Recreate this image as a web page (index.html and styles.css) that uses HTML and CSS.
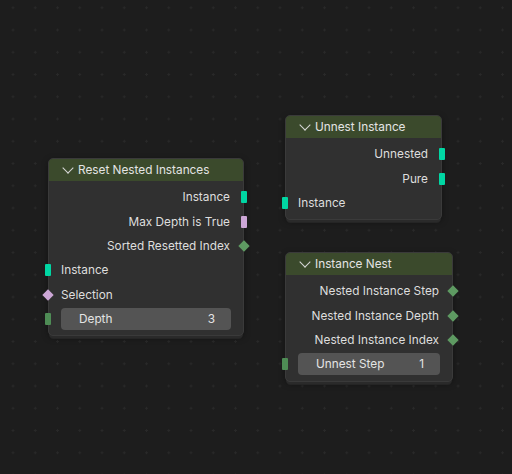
FILE: index.html
```html
<!DOCTYPE html>
<html>
<head>
  <title>Node Editor</title>
  <link rel="stylesheet" href="styles.css">
</head>
<body>
  <div class="canvas">

    <div class="node node-reset">
      <div class="node-header"><span class="chevron"></span>Reset Nested Instances</div>
      <div class="node-body">
        <div class="row out">Instance<span class="socket bar geo"></span></div>
        <div class="row out">Max Depth is True<span class="socket bar bool"></span></div>
        <div class="row out">Sorted Resetted Index<span class="socket diamond int"></span></div>
        <div class="row in"><span class="socket bar geo"></span>Instance</div>
        <div class="row in"><span class="socket diamond bool"></span>Selection</div>
        <div class="row in">
          <span class="socket bar int-dim"></span>
          <div class="field"><span>Depth</span><span>3</span></div>
        </div>
      </div>
    </div>

    <div class="node node-unnest">
      <div class="node-header"><span class="chevron"></span>Unnest Instance</div>
      <div class="node-body">
        <div class="row out">Unnested<span class="socket bar geo"></span></div>
        <div class="row out">Pure<span class="socket bar geo"></span></div>
        <div class="row in"><span class="socket bar geo"></span>Instance</div>
      </div>
    </div>

    <div class="node node-nest">
      <div class="node-header"><span class="chevron"></span>Instance Nest</div>
      <div class="node-body">
        <div class="row out">Nested Instance Step<span class="socket diamond int"></span></div>
        <div class="row out">Nested Instance Depth<span class="socket diamond int"></span></div>
        <div class="row out">Nested Instance Index<span class="socket diamond int"></span></div>
        <div class="row in">
          <span class="socket bar int-dim"></span>
          <div class="field"><span>Unnest Step</span><span>1</span></div>
        </div>
      </div>
    </div>

  </div>
</body>
</html>
```

FILE: styles.css
```css
body {
  margin: 0;
  background: #1d1d1d;
  font-family: Inter, "Noto Sans", sans-serif;
  font-size: 11.8px;
  color: #dedede;
}

.canvas {
  position: relative;
  width: 512px;
  height: 474px;
  overflow: hidden;
  background-color: #1d1d1d;
  background-image: radial-gradient(circle, #292929 1px, transparent 1.2px);
  background-size: 22.25px 22.25px;
  background-position: 1.9px 18.9px;
}

/* nodes sit on a free canvas */
.node {
  position: absolute;
  background: #303030;
  border: 1px solid #3a3a3a;
  border-radius: 5px;
  box-shadow: 0 3px 0 -1px #2a2a2a, 0 5px 0 -2px #252525, 0 2px 6px rgba(0, 0, 0, 0.35);
}

.node-reset { left: 48px; top: 158px; width: 194px; }
.node-unnest { left: 285px; top: 115px; width: 155px; }
.node-nest { left: 285px; top: 252px; width: 166px; }

.node-header {
  height: 22px;
  display: flex;
  align-items: center;
  padding-left: 14px;
  background: #3b4a2c;
  border-radius: 4px 4px 0 0;
  color: #e4e4e4;
}

.chevron {
  width: 7px;
  height: 7px;
  border-right: 1.2px solid #d8d8d8;
  border-bottom: 1.2px solid #d8d8d8;
  transform: rotate(45deg);
  margin: -5px 6px 0 1px;
}

.node-body {
  padding: 4px 0 4px;
}

.row {
  position: relative;
  height: 24.4px;
  display: flex;
  align-items: center;
}

.row.out {
  justify-content: flex-end;
  padding-right: 13px;
}

.row.in {
  padding-left: 12px;
  padding-right: 12px;
}

.socket {
  position: absolute;
  top: 50%;
}

.socket.bar {
  width: 6px;
  height: 12px;
  margin-top: -6px;
  border-radius: 1px;
}

.socket.diamond {
  width: 8px;
  height: 8px;
  margin-top: -4px;
  transform: rotate(45deg);
}

.row.out .socket.bar { right: -4px; }
.row.in .socket.bar { left: -4px; }
.row.out .socket.diamond { right: -5px; }
.row.in .socket.diamond { left: -5px; }

.geo { background: #00d6a3; }
.bool { background: #cca6d6; }
.int { background: #5e9a62; }
.int-dim { background: #4e8c55; }

.field {
  flex: 1;
  height: 22px;
  display: flex;
  align-items: center;
  justify-content: space-between;
  padding: 0 16px 0 18px;
  background: #545454;
  border-radius: 4px;
  color: #e4e4e4;
}
```
